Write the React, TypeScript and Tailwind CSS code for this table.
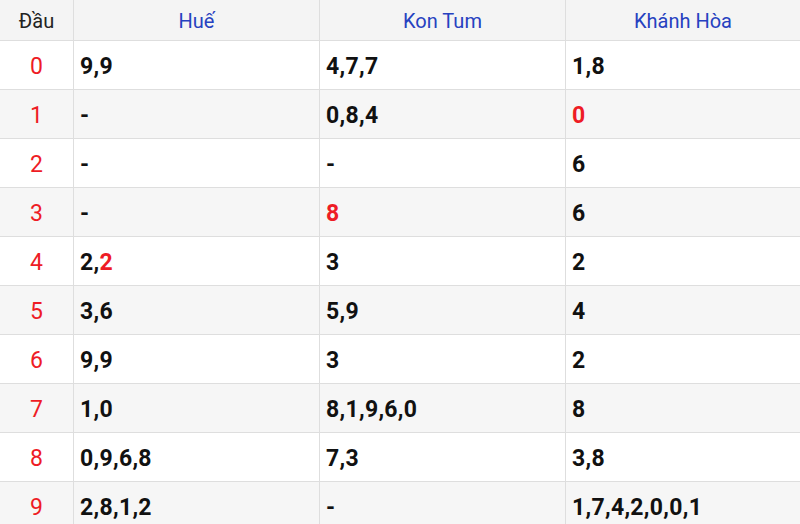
type Cell = (string | { red: string })[];

const rows: { head: string; cols: Cell[] }[] = [
  { head: "0", cols: [["9,9"], ["4,7,7"], ["1,8"]] },
  { head: "1", cols: [["-"], ["0,8,4"], [{ red: "0" }]] },
  { head: "2", cols: [["-"], ["-"], ["6"]] },
  { head: "3", cols: [["-"], [{ red: "8" }], ["6"]] },
  { head: "4", cols: [["2,", { red: "2" }], ["3"], ["2"]] },
  { head: "5", cols: [["3,6"], ["5,9"], ["4"]] },
  { head: "6", cols: [["9,9"], ["3"], ["2"]] },
  { head: "7", cols: [["1,0"], ["8,1,9,6,0"], ["8"]] },
  { head: "8", cols: [["0,9,6,8"], ["7,3"], ["3,8"]] },
  { head: "9", cols: [["2,8,1,2"], ["-"], ["1,7,4,2,0,0,1"]] },
];

const provinces = ["Huế", "Kon Tum", "Khánh Hòa"];

export default function App() {
  return (
    <div className="w-[800px] h-[524px] overflow-hidden bg-white font-['Roboto',sans-serif]">
      <div className="grid grid-cols-[74px_246px_246px_1fr] h-[41px] bg-[#f4f4f4] border-b border-[#dedede]">
        <div className="flex items-center justify-center pt-[2px] border-r border-[#dedede] text-[20px] text-[#222]">
          Đầu
        </div>
        {provinces.map((p, i) => (
          <div
            key={p}
            className={
              "flex items-center justify-center pt-[2px] text-[20px] text-[#2641c0] " +
              (i < 2 ? "border-r border-[#dedede]" : "")
            }
          >
            {p}
          </div>
        ))}
      </div>
      {rows.map((r, idx) => (
        <div
          key={r.head}
          className={
            "grid grid-cols-[74px_246px_246px_1fr] h-[49px] border-b border-[#dedede] " +
            (idx % 2 === 1 ? "bg-[#f6f6f6]" : "bg-white")
          }
        >
          <div className="flex items-center justify-center pt-[4px] border-r border-[#dedede] text-[23px] text-[#ee1c25]">
            {r.head}
          </div>
          {r.cols.map((c, i) => (
            <div
              key={i}
              className={
                "flex items-center pl-[6px] pt-[4px] text-[23px] font-bold text-[#111] tracking-[0.3px] " +
                (i < 2 ? "border-r border-[#dedede]" : "")
              }
            >
              {c.map((part, j) =>
                typeof part === "string" ? (
                  <span key={j}>{part}</span>
                ) : (
                  <span key={j} className="text-[#ee1c25]">
                    {part.red}
                  </span>
                )
              )}
            </div>
          ))}
        </div>
      ))}
    </div>
  );
}
